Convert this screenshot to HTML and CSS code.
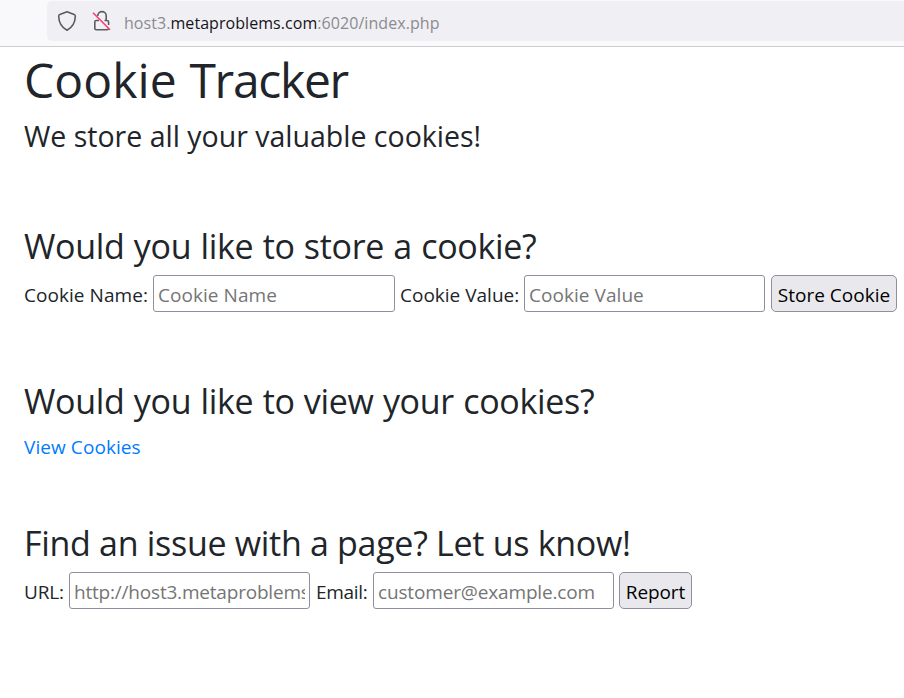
FILE: index.html
```html
<!DOCTYPE html>
<html lang="en">
<head>
<meta charset="utf-8">
<title>Cookie Tracker</title>
<link rel="stylesheet" href="styles.css">
</head>
<body>
<header class="toolbar">
  <div class="urlbar">
    <svg class="shield" width="20" height="22" viewBox="0 0 20 22" fill="none" stroke="#5b5b66" stroke-width="1.6" stroke-linejoin="round"><path d="M10 1.8 L17.2 4.6 Q18.4 5 18.3 6.4 C18.1 13 15.5 17.2 10 20.2 C4.500 17.2 1.900 13 1.700 6.400 Q1.600 5 2.800 4.600 Z"/></svg>
    <svg class="lock" width="20" height="22" viewBox="0 0 20 22" fill="none" stroke="#5b5b66" stroke-width="1.6"><path d="M5.800 6 V5.800 A4.200 4.200 0 0 1 14.200 5.800 V10.500 M7 10.500 H4.300 Q2.800 10.500 2.800 12 V18.300 Q2.800 19.800 4.300 19.800 H15 Q16.600 19.800 16.600 18.300 M12.500 10.500 H15 Q16.600 10.500 16.600 12 V15"/><path d="M1 2.800 L18 19.800" stroke="#ff3b6b" stroke-width="1.6"/></svg>
    <span class="address">host3.<b>metaproblems.com</b>:6020/index.php</span>
  </div>
</header>
<main>
  <h1>Cookie <span>Tracker</span></h1>
  <h4>We store all your valuable cookies!</h4>
  <section class="store">
    <h3 class="q1">Would you like to store a cookie?</h3>
    <form class="row">
      <label class="name" for="n">Cookie Name:</label>
      <input class="wide" id="n" placeholder="Cookie Name">
      <label class="value" for="v">Cookie Value:</label>
      <input id="v" placeholder="Cookie Value">
      <button class="submit" type="button">Store Cookie</button>
    </form>
  </section>
  <section class="view">
    <h3 class="q2">Would you like to view your cookies?</h3>
    <a href="#">View Cookies</a>
  </section>
  <section class="report">
    <h3 class="q3">Find an issue with a page? Let us know!</h3>
    <form class="row">
      <label class="url" for="u">URL:</label>
      <input id="u" placeholder="http://host3.metaproblems.com">
      <label class="email" for="e">Email:</label>
      <input class="mail" id="e" placeholder="customer@example.com">
      <button class="send" type="button">Report</button>
    </form>
  </section>
</main>
</body>
</html>
```
FILE: styles.css
```css
* { box-sizing: border-box; }
body {
  margin: 0;
  background: #fff;
  color: #212529;
  font: 19px/30px "Open Sans", "Noto Sans", sans-serif;
  overflow: hidden;
}
.toolbar {
  height: 47px;
  padding: 1px 0 0 47px;
  background: #f9f9fb;
  border-bottom: 1px solid #ccccd1;
}
.urlbar {
  display: flex;
  align-items: center;
  height: 40px;
  padding-left: 10px;
  background: #f0f0f4;
  border-radius: 5px 0 0 5px;
}
.lock { margin-left: 15px; }
.address {
  margin-left: 12px;
  padding-top: 3px;
  font-size: 16px;
  letter-spacing: 0.06px;
  color: #8b8b90;
  white-space: nowrap;
}
.address b { font-weight: 400; color: #15141a; }
main { padding: 3px 0 0 24px; }
h1, h3, h4 { margin: 0; font-weight: 400; white-space: nowrap; }
h1 { height: 68px; font-size: 48px; line-height: 60px; letter-spacing: 0.1px; }
h1 span { letter-spacing: -1.3px; }
h4 { height: 36px; font-size: 28.5px; line-height: 36px; letter-spacing: 0; }
h3 { height: 42px; font-size: 34px; line-height: 42px; letter-spacing: -0.3px; word-spacing: 0.7px; }
.q3 { word-spacing: 0; }
.store { margin-top: 71px; }
.row { display: flex; align-items: center; height: 37px; margin-top: 8px; }
.view { margin-top: 68px; }
.view a {
  display: block;
  margin: 10px 0 -1px;
  letter-spacing: 0.08px;
  color: #007bff;
  text-decoration: none;
}
.report { margin-top: 61px; }
label { flex: none; height: 28px; line-height: 30px; letter-spacing: 0.05px; white-space: nowrap; }
.name { width: 129px; }
.value { width: 124px; margin-left: 5px; letter-spacing: 0; }
.url { width: 45px; letter-spacing: -0.2px; }
.email { width: 57px; margin-left: 6px; letter-spacing: -0.3px; }
input {
  flex: none;
  width: 241px;
  height: 37px;
  padding: 2px 4px 0;
  border: 1px solid #8f8f9d;
  border-radius: 3px;
  background: #fff;
  font: inherit;
  letter-spacing: 0.05px;
}
.wide { width: 242px; }
#u { letter-spacing: -0.2px; }
.mail { letter-spacing: -0.15px; }
input::placeholder { color: #757575; opacity: 1; }
button {
  flex: none;
  height: 37px;
  padding: 2px 0 0;
  border: 1px solid #8f8f9d;
  border-radius: 5px;
  background: #e9e9ed;
  color: #000;
  font: inherit;
  letter-spacing: 0;
  white-space: nowrap;
}
.submit { width: 126px; margin-left: 6px; }
.send { width: 73px; margin-left: 5px; letter-spacing: -0.1px; }
```
